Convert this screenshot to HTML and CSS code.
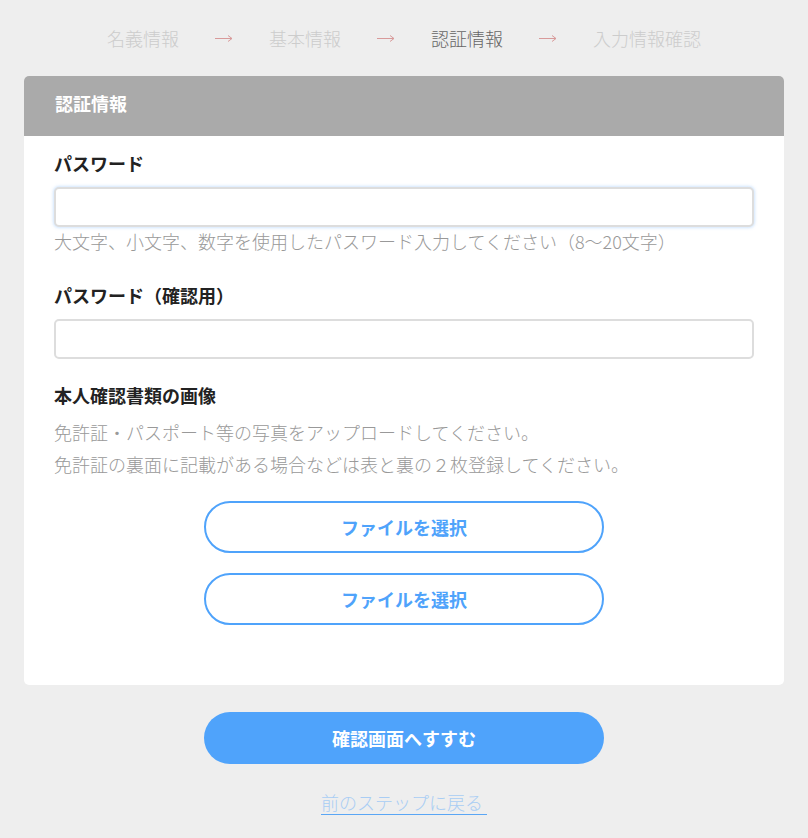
FILE: index.html
```html
<!DOCTYPE html>
<html lang="ja">
<head>
<meta charset="utf-8">
<title>認証情報</title>
<link rel="stylesheet" href="styles.css">
</head>
<body>
<div class="page">
  <nav class="steps">
    <span class="step">名義情報</span>
    <svg class="arrow" width="18" height="10" viewBox="0 0 18 10"><path d="M0 5.5H17M13 2.5L17 5.5L13 8.5" fill="none" stroke="#d89a9a" stroke-width="1"/></svg>
    <span class="step">基本情報</span>
    <svg class="arrow" width="18" height="10" viewBox="0 0 18 10"><path d="M0 5.5H17M13 2.5L17 5.5L13 8.5" fill="none" stroke="#d89a9a" stroke-width="1"/></svg>
    <span class="step active">認証情報</span>
    <svg class="arrow" width="18" height="10" viewBox="0 0 18 10"><path d="M0 5.5H17M13 2.5L17 5.5L13 8.5" fill="none" stroke="#d89a9a" stroke-width="1"/></svg>
    <span class="step">入力情報確認</span>
  </nav>

  <section class="card">
    <h2 class="card-head">認証情報</h2>
    <div class="card-body">
      <label class="label">パスワード</label>
      <input class="input focus" type="password">
      <p class="hint">大文字、小文字、数字を使用したパスワード入力してください（8〜20文字）</p>

      <label class="label label2">パスワード（確認用）</label>
      <input class="input" type="password">

      <label class="label label3">本人確認書類の画像</label>
      <p class="note">免許証・パスポート等の写真をアップロードしてください。<br>免許証の裏面に記載がある場合などは表と裏の２枚登録してください。</p>

      <div class="files">
        <button class="file-btn">ファイルを選択</button>
        <button class="file-btn">ファイルを選択</button>
      </div>
    </div>
  </section>

  <div class="actions">
    <button class="submit">確認画面へすすむ</button>
    <a class="back" href="#">前のステップに戻る&nbsp;</a>
  </div>
</div>
</body>
</html>
```

FILE: styles.css
```css
html, body {
  margin: 0;
  padding: 0;
  background: #eeeeee;
}
body {
  font-family: "Noto Sans CJK JP", "Noto Sans", sans-serif;
  font-size: 18px;
  color: #333;
}
.page {
  padding: 0 24px;
}
.steps {
  display: flex;
  justify-content: center;
  align-items: center;
  gap: 36px;
  height: 76px;
  padding-bottom: 0;
  box-sizing: border-box;
}
.step {
  font-weight: 300;
  color: #cccccc;
  line-height: 28px;
}
.step.active {
  color: #666666;
}
.arrow {
  display: block;
}
.card {
  background: #fff;
  border-radius: 5px;
  overflow: hidden;
}
.card-head {
  margin: 0;
  background: #aaaaaa;
  color: #fff;
  font-size: 18px;
  font-weight: 700;
  height: 60px;
  line-height: 55px;
  padding: 0 31px;
}
.card-body {
  padding: 13px 30px 60px;
  display: flex;
  flex-direction: column;
}
.label {
  font-weight: 700;
  line-height: 28px;
  color: #222;
}
.input {
  margin-top: 10px;
  height: 40px;
  box-sizing: border-box;
  border: 2px solid #dddddd;
  border-radius: 5px;
  background: #fff;
  outline: none;
  width: 100%;
}
.input.focus {
  box-shadow: 0 0 3px 1px rgba(120, 180, 250, 0.35);
}
.hint {
  margin: 0;
  font-weight: 300;
  color: #999;
  line-height: 28px;
}
.label2 {
  margin-top: 26px;
}
.label3 {
  margin-top: 22px;
}
.note {
  margin: 7px 0 0;
  font-weight: 300;
  color: #999;
  line-height: 32px;
}
.files {
  display: flex;
  flex-direction: column;
  align-items: center;
  gap: 20px;
  margin-top: 21px;
}
.file-btn {
  width: 400px;
  height: 52px;
  border: 2px solid #4fa3fb;
  border-radius: 26px;
  background: #fff;
  color: #4fa3fb;
  font-family: inherit;
  font-size: 18px;
  font-weight: 700;
}
.actions {
  display: flex;
  flex-direction: column;
  align-items: center;
  padding-top: 27px;
}
.submit {
  width: 400px;
  height: 52px;
  border: none;
  border-radius: 26px;
  background: #4fa3fb;
  color: #fff;
  font-family: inherit;
  font-size: 18px;
  font-weight: 700;
}
.back {
  margin-top: 24px;
  line-height: 28px;
  color: #a9cdf4;
  font-weight: 300;
  text-decoration: underline;
  text-decoration-color: #5aa6f5;
  text-underline-offset: 4px;
}
```
